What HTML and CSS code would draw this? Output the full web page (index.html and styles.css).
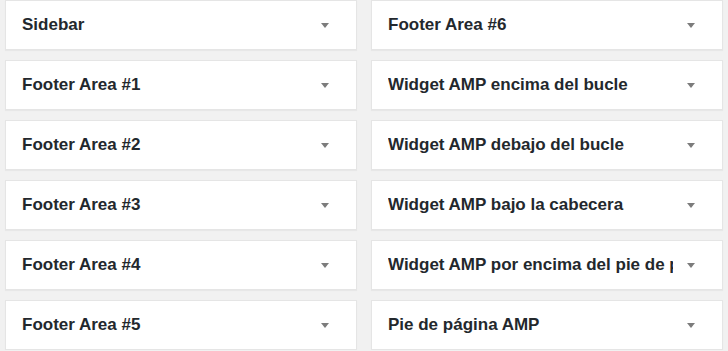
FILE: index.html
```html
<!DOCTYPE html>
<html>
<head>
<meta name="viewport" content="width=device-width, initial-scale=1">
<link rel="stylesheet" href="styles.css">
</head>
<body>

  <div class="columns">
    <div class="column">
      <div class="widget"><h3 class="title">Sidebar</h3><span class="toggle"></span></div>
      <div class="widget"><h3 class="title">Footer Area #1</h3><span class="toggle"></span></div>
      <div class="widget"><h3 class="title">Footer Area #2</h3><span class="toggle"></span></div>
      <div class="widget"><h3 class="title">Footer Area #3</h3><span class="toggle"></span></div>
      <div class="widget"><h3 class="title">Footer Area #4</h3><span class="toggle"></span></div>
      <div class="widget"><h3 class="title">Footer Area #5</h3><span class="toggle"></span></div>
    </div>

    <div class="column">
      <div class="widget"><h3 class="title">Footer Area #6</h3><span class="toggle"></span></div>
      <div class="widget"><h3 class="title">Widget AMP encima del bucle</h3><span class="toggle"></span></div>
      <div class="widget"><h3 class="title">Widget AMP debajo del bucle</h3><span class="toggle"></span></div>
      <div class="widget"><h3 class="title">Widget AMP bajo la cabecera</h3><span class="toggle"></span></div>
      <div class="widget"><h3 class="title">Widget AMP por encima del pie de página</h3><span class="toggle"></span></div>
      <div class="widget"><h3 class="title">Pie de página AMP</h3><span class="toggle"></span></div>
    </div>
  </div>

</body>
</html>
```

FILE: styles.css
```css
body {
  margin: 0;
  background-color: #f1f1f1;
  font-family: "Liberation Sans", Arial, Helvetica, sans-serif;
  color: #23282d;
}

* {
  box-sizing: border-box;
}

/* Two sidebar columns */
.columns {
  display: flex;
  gap: 14px;
  padding: 0 5px;
}

.column {
  flex: 1 1 0;
  min-width: 0;
  display: flex;
  flex-direction: column;
  gap: 10px;
}

/* One collapsed widget area */
.widget {
  display: flex;
  align-items: center;
  height: 50px;
  padding: 0 27px 0 16px;
  background-color: #fff;
  border: 1px solid #e5e5e5;
  box-shadow: 0 1px 1px rgba(0, 0, 0, 0.04);
}

.title {
  flex: 1;
  min-width: 0;
  margin: 0;
  overflow: hidden;
  white-space: nowrap;
  font-size: 17px;
  font-weight: bold;
}

/* Down arrow */
.toggle {
  width: 0;
  height: 0;
  margin-left: 14px;
  border-left: 4px solid transparent;
  border-right: 4px solid transparent;
  border-top: 5px solid #7c7c7c;
}
```
